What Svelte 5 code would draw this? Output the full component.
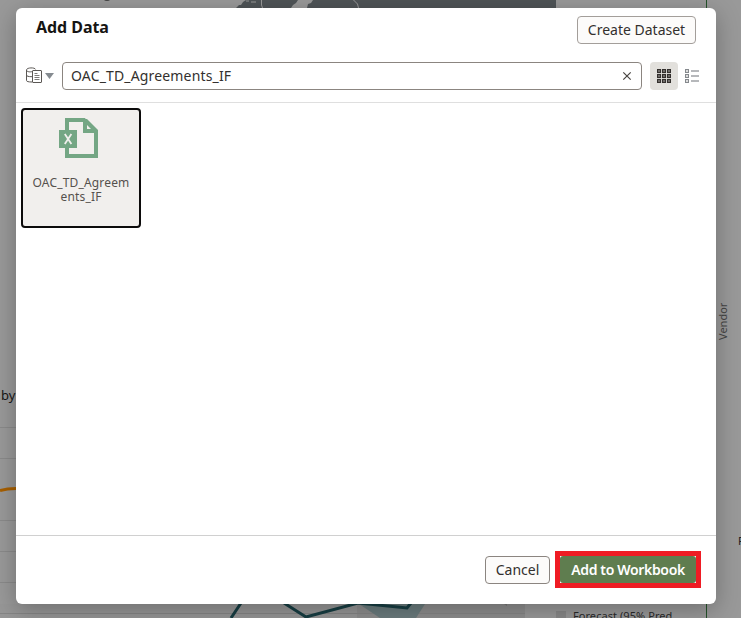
<script>
  let query = $state('OAC_TD_Agreements_IF');
  const cells = [0, 5, 10];
  const gridLines = [427, 458, 520, 551, 582];
</script>

<main class="page">
  <svg class="canvas" width="741" height="618" viewBox="0 0 741 618" aria-hidden="true">
    <rect width="741" height="618" fill="#999" />
    <path d="M104 0h6q-1 1-3 1t-3-1z" fill="#444" />
    <path d="M236 8l3-3h2l2-3 3-2h310v8z" fill="#4f5457" />
    <path d="M291 8l2-3 3-2 2-3h15l-2 3-3 1-1 4z" fill="#999" />
    <path d="M246 1h3m2 1h5M261.500 0v5l1 3M353.500 0l4 4 1 4" fill="none" stroke="#999" />
    <path d="M706.500 0v618" stroke="#24522a" />
    {#each gridLines as y}
      <path d="M0 {y}.5H16" stroke="#8a8a8a" />
    {/each}
    <path d="M0 490.500Q7 488.500 16 488.500" fill="none" stroke="#a75f00" stroke-width="3" />
    <rect y="604" width="525" height="14" fill="#979797" />
    <rect x="357" y="604" width="168" height="14" fill="#8e8e8e" />
    <path d="M0 613.500H525" stroke="#868686" />
    <path d="M359 604h66l-9 14h-36z" fill="#6b7c7e" />
    <path d="M231 618l10-15M284 603l22 14 52-14 49 5 4-5" fill="none" stroke="#173e43" stroke-width="3" />
    <path d="M504 604l3 2v-2z" fill="#777" />
    <rect x="556" y="611" width="10" height="7" fill="#898989" />
  </svg>
  <span class="label by">by</span>
  <span class="label vendor">Vendor</span>
  <span class="label edge">F</span>
  <span class="label forecast">Forecast (95% Pred</span>

  <section class="dialog" role="dialog" aria-label="Add Data">
    <header>
      <h1>Add Data</h1>
      <button class="btn create"><span>Create Dataset</span></button>
    </header>
    <div class="tools">
      <button class="source" aria-label="Data type">
        <svg width="29" height="18" viewBox="0 0 29 18">
          <g fill="none" stroke="#5b5754" stroke-width="1">
            <path d="M.5 3C.5.3 9.500.3 9.500 2.500M.5 3c0 2 4 2.200 6 1.500M.5 3v10.500c0 1 2 1.500 5.500 1.500M.5 8c0 1.300 2 1.700 5.500 1.700" />
            <rect x="6.500" y="3.500" width="9" height="12" rx=".5" fill="#fff" />
            <path d="M8.500 6.500h3M8.500 8.500h5M8.500 10.500h5M8.500 12.500h5" stroke-width=".8" />
          </g>
          <path d="M19 6h9l-4.500 6z" fill="#858b90" />
        </svg>
      </button>
      <div class="search">
        <input bind:value={query} aria-label="Search" />
        <button class="clear" aria-label="Clear" onclick={() => (query = '')}>
          <svg width="10" height="10" viewBox="0 0 10 10"><path d="M1.300 1.300l7.400 7.400M8.700 1.300L1.300 8.700" stroke="#494542" stroke-width="1.200" /></svg>
        </button>
      </div>
      <button class="view on" aria-label="Grid view">
        <svg width="14" height="14" viewBox="0 0 14 14">
          {#each cells as y}
            {#each cells as x}
              <rect x={x + 0.6} y={y + 0.6} width="2.800" height="2.800" fill="#9c9894" stroke="#34302e" stroke-width="1.300" />
            {/each}
          {/each}
        </svg>
      </button>
      <button class="view" aria-label="List view">
        <svg width="14" height="14" viewBox="0 0 14 14">
          {#each cells as y}
            <rect x=".5" y={y + 0.5} width="3" height="3" fill="#ddd" stroke="#85898d" />
            <path d="M6 {y + 2}h8" stroke="#85898d" stroke-width="1.200" />
          {/each}
        </svg>
      </button>
    </div>
    <div class="results">
      <div class="tile">
        <svg width="40" height="40" viewBox="0 0 40 40">
          <path d="M8 12V2h17l12 12v24H8V29" fill="none" stroke="#74a684" stroke-width="4" />
          <path d="M24 1h4l11 11v3H24z" fill="#74a684" />
          <path d="M28 7l4 4h-4z" fill="#f1efed" />
          <rect y="12" width="18" height="18" fill="#74a684" />
          <path d="M5.800 16l6.600 10M12.400 16L5.800 26" stroke="#f1efed" stroke-width="1.800" />
        </svg>
        <p>OAC_TD_Agreem<br />ents_IF</p>
      </div>
    </div>
    <footer>
      <button class="btn cancel"><span>Cancel</span></button>
      <div class="mark"><button class="primary"><span>Add to Workbook</span></button></div>
    </footer>
  </section>
</main>

<style>
  :global(body) { overflow: hidden; }
  .page {
    position: relative;
    width: 741px;
    height: 618px;
    box-sizing: border-box;
    padding: 8px 25px 14px 16px;
    overflow: hidden;
    font-family: 'Noto Sans', 'Open Sans', sans-serif;
    color: #161513;
  }
  .canvas { position: absolute; left: 0; top: 0; }
  .label { position: absolute; white-space: nowrap; line-height: 16px; }
  .by { left: 1px; top: 387px; font-size: 13px; color: #171717; }
  .vendor {
    left: 715px; top: 302px; height: 38px; font-size: 11px; color: #444;
    writing-mode: vertical-rl; transform: rotate(180deg); line-height: 16px;
  }
  .edge { left: 738px; top: 533px; font-size: 11px; color: #222; }
  .forecast { left: 573px; top: 608px; font-size: 11px; letter-spacing: 0.06px; color: #2a2a2a; }
  .dialog {
    position: relative;
    width: 700px;
    height: 596px;
    display: flex;
    flex-direction: column;
    border-radius: 6px;
    background: #fff;
    box-shadow: 0 6px 24px rgba(0, 0, 0, 0.28);
  }
  header {
    height: 54px;
    box-sizing: border-box;
    padding: 8px 20px 0;
    display: flex;
    justify-content: space-between;
    align-items: flex-start;
  }
  h1 { margin: 0; font-size: 16px; line-height: 22px; font-weight: 700; letter-spacing: -0.05px; }
  button { font-family: inherit; padding: 0; border: 0; background: none; color: inherit; white-space: nowrap; }
  .btn {
    height: 28px;
    box-sizing: border-box;
    border: 1px solid #8b8580;
    border-radius: 4px;
    background: #fcfbfa;
    color: #33302e;
    font-size: 14px;
    line-height: 26px;
  }
  .create { width: 119px; border-color: #a39e9a; }
  .cancel { width: 65px; }
  .tools {
    height: 41px;
    box-sizing: border-box;
    padding: 0 10px;
    display: flex;
    align-items: flex-start;
    border-bottom: 1px solid #dfdfdf;
  }
  .source { width: 36px; height: 28px; display: flex; align-items: center; }
  .search {
    width: 580px;
    height: 28px;
    box-sizing: border-box;
    display: flex;
    align-items: center;
    border: 1px solid #8b8580;
    border-radius: 4px;
    padding: 0 9px 0 8px;
    margin-right: 8px;
  }
  input {
    flex: 1;
    min-width: 0;
    padding: 0;
    border: 0;
    outline: 0;
    background: none;
    color: #33302e;
    font: 14px/22px 'Noto Sans', 'Open Sans', sans-serif;
    letter-spacing: 0.16px;
  }
  .clear { display: flex; }
  .view { width: 28px; height: 28px; display: flex; align-items: center; justify-content: center; border-radius: 4px; }
  .on { background: #e2e0dc; }
  .results { flex: 1; padding: 5px; }
  .tile {
    width: 120px;
    height: 120px;
    box-sizing: border-box;
    border: 2px solid #0c0b0b;
    border-radius: 4px;
    background: #f1efed;
    display: flex;
    flex-direction: column;
    align-items: center;
    padding-top: 8px;
  }
  .tile svg { margin-right: 5px; }
  .tile p { margin: 18px 0 0; font-size: 12px; line-height: 14px; letter-spacing: 0.17px; text-align: center; color: #55514d; white-space: nowrap; }
  footer {
    height: 69px;
    box-sizing: border-box;
    border-top: 1px solid #d0d0d0;
    padding: 15px 15px 0;
    display: flex;
    justify-content: flex-end;
    align-items: flex-start;
    gap: 5px;
  }
  .cancel { margin-top: 5px; }
  .mark { width: 146px; height: 37px; box-sizing: border-box; border: 5px solid #ef1c24; background: #fff; display: flex; }
  .primary { flex: 1; border-radius: 3px; background: #5f7d4f; color: #fff; font-size: 14px; font-weight: 600; line-height: 27px; letter-spacing: -0.34px; }
</style>
